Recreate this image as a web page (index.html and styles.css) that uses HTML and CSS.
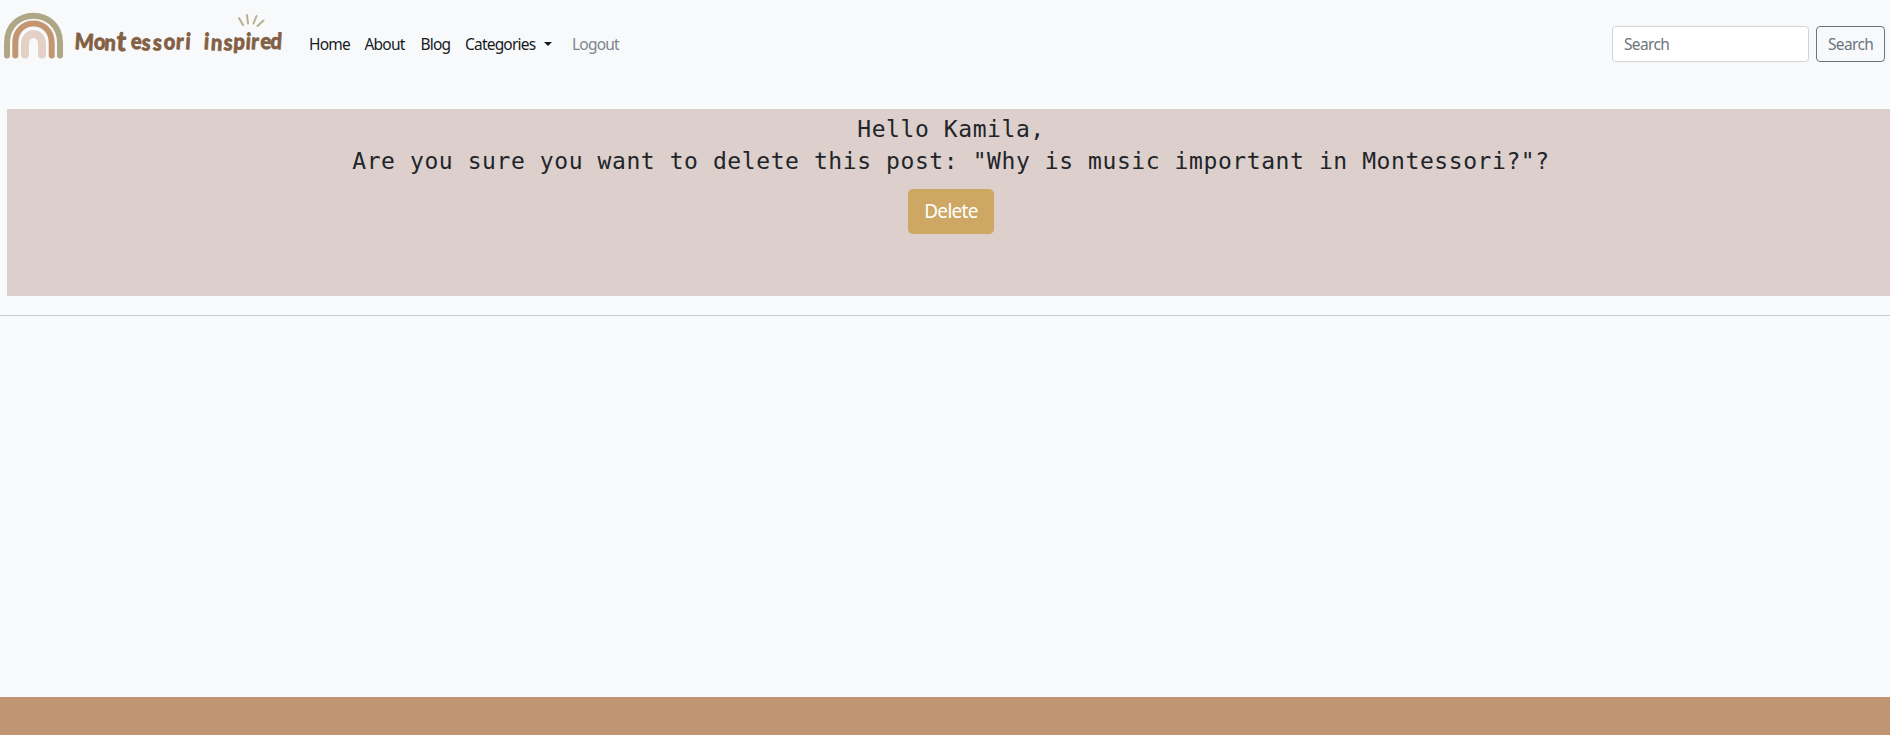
FILE: index.html
```html
<!DOCTYPE html>
<html lang="en">
<head>
<meta charset="utf-8">
<title>Montessori inspired</title>
<link rel="stylesheet" href="styles.css">
</head>
<body>
<header class="navbar">
  <a class="brand">
    <svg width="290" height="64" viewBox="0 0 290 64" fill="none" stroke-linecap="round">
      <path d="M7 55.500V43C7 6.500 60 6.500 60 43V55.500" stroke="#afa685" stroke-width="6"/>
      <path d="M15.300 55.500V43C15.300 17 51.700 17 51.700 43V55.500" stroke="#c39571" stroke-width="6"/>
      <path d="M25 54.500V44.500C25 30.500 42 30.500 42 44.500V54.500" stroke="#e3d1c5" stroke-width="8"/>
      <path d="M239 18L243 25M247 15L248 23.500M256.500 16L253.500 23.500M263.500 20.500L257.500 26" stroke="#b8b08e" stroke-width="2"/>
      <text class="brand-text" transform="scale(.9 1)" rotate="4" y="49" x="82.500">M<tspan x="104 115.600" y="49 50">on</tspan><tspan class="brand-tall" x="129" y="50.500">t</tspan><tspan x="145 157 169.500 181.500 195 205.500" y="48.500 50 50 49 49 49">essori</tspan> <tspan x="226 234 248 259 272.500 278.500 289 300" y="49 50 50 49 49 49 48.500 48.500">inspired</tspan></text>
    </svg>
  </a>
  <nav class="links">
    <a class="link home">Home</a>
    <a class="link about">About</a>
    <a class="link blog">Blog</a>
    <a class="link categories">Categories<span class="caret"></span></a>
    <a class="link logout">Logout</a>
  </nav>
  <form class="search">
    <input class="search-input" type="search" placeholder="Search">
    <button class="search-button" type="button">Search</button>
  </form>
</header>
<main class="content">
  <section class="confirm">
    <p class="message">Hello Kamila,<br>Are you sure you want to delete this post: "Why is music important in Montessori?"?</p>
    <button class="delete" type="button">Delete</button>
  </section>
  <hr class="rule">
</main>
<footer class="footer"></footer>
</body>
</html>
```
FILE: styles.css
```css
* { box-sizing: border-box; }
body {
  margin: 0;
  height: 735px;
  display: flex;
  flex-direction: column;
  overflow: hidden;
  background: #f9fafc;
  color: #212529;
  font-family: "Noto Sans", "Open Sans", sans-serif;
  font-size: 15.5px;
}
.navbar {
  height: 89px;
  flex: none;
  display: flex;
  align-items: flex-start;
  padding-right: 5px;
  background: #f8f9fb;
}
.brand { width: 309px; height: 64px; }
.brand svg { display: block; }
.brand-text {
  font-family: Lato, sans-serif;
  font-weight: 900;
  font-size: 22.5px;
  fill: #835f43;
  stroke: #835f43;
  stroke-width: .7px;
  stroke-linejoin: round;
}
.brand-tall { font-size: 28px; }
.links { display: flex; padding-top: 32px; line-height: 24px; }
.link { color: #16191b; white-space: nowrap; font-size: 15.5px; letter-spacing: -.8px; }
.home { width: 55.5px; }
.about { width: 56px; }
.blog { width: 44.5px; }
.categories { width: 107px; }
.logout { color: #7e858b; }
.caret {
  display: inline-block;
  margin-left: 9px;
  vertical-align: 4px;
  border-top: 4px solid #16191b;
  border-left: 4px solid transparent;
  border-right: 4px solid transparent;
}
.search { display: flex; gap: 7px; margin: 26px 0 0 auto; }
.search-input, .search-button {
  height: 36px;
  padding: 0 11px;
  border-radius: 4px;
  font: inherit;
  letter-spacing: -.65px;
}
.search-input { width: 197px; border: 1px solid #ced4da; background: #fff; }
.search-input::placeholder { color: #6c757d; opacity: 1; }
.search-button { width: 69px; border: 1px solid #6c757d; background: transparent; color: #6c757d; }
.content { flex: 1; padding-top: 20px; }
.confirm {
  height: 187px;
  margin-left: 7px;
  padding: 4px 0 0 5px;
  background: #ddcfcc;
  text-align: center;
}
.message {
  margin: 0;
  font-family: "DejaVu Sans Mono", monospace;
  font-size: 23px;
  line-height: 32px;
  letter-spacing: .58px;
}
.delete {
  width: 86px;
  height: 45px;
  margin-top: 12px;
  padding: 0 0 1px;
  border: 0;
  border-radius: 5px;
  background: #cda763;
  color: #fff;
  font: 19px "Noto Sans", sans-serif;
  letter-spacing: -.7px;
}
.rule { margin: 19px 0 0; border: 0; border-top: 1px solid #c8cacc; }
.footer { height: 38px; flex: none; background: #c09572; }
```
